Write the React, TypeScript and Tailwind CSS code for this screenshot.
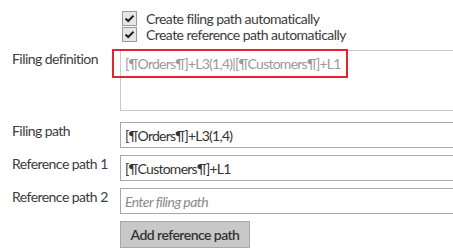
import React from "react";

function Check() {
  return (
    <span className="flex h-[15px] w-[15px] items-center justify-center border border-[#9a9a9a] bg-[#e6e6e6]">
      <svg width="11" height="9" viewBox="0 0 11 9">
        <path d="M1.5 4.5 L4.2 7 L9.5 1.8" fill="none" stroke="#222" strokeWidth="2" />
      </svg>
    </span>
  );
}

export default function App() {
  return (
    <div
      className="relative h-[252px] w-[453px] overflow-hidden bg-white text-[14px] tracking-[-0.55px] text-[#3c3c3c]"
      style={{ fontFamily: "Lato, 'Open Sans', sans-serif" }}
    >
      <div className="flex w-[560px] flex-col">
        <div className="ml-[122px] mt-[11px] flex flex-col gap-[1px]">
          <label className="flex h-[15px] items-center gap-[9px]">
            <Check />
            <span className="leading-[15px]">Create filing path automatically</span>
          </label>
          <label className="flex h-[15px] items-center gap-[9px]">
            <Check />
            <span className="leading-[15px]">Create reference path automatically</span>
          </label>
        </div>

        <div className="mt-[8px] flex">
          <div className="w-[120px] pl-[12px] leading-[18px]">Filing definition</div>
          <div className="h-[61px] flex-1 border border-[#c8c8c8] px-[4px] pt-[4px] leading-[18px] tracking-[-0.75px] text-[#9a9a9a]">
            [¶Orders¶]+L3(1,4)|[¶Customers¶]+L1
          </div>
        </div>

        <div className="mt-[11px] flex flex-col gap-[7px]">
          <div className="flex">
            <div className="w-[120px] pl-[12px] leading-[18px]">Filing path</div>
            <div className="flex h-[26px] flex-1 items-center border border-[#a8a8a8] px-[4px] tracking-[-0.75px] text-[#333]">
              [¶Orders¶]+L3(1,4)
            </div>
          </div>
          <div className="flex">
            <div className="w-[120px] pl-[12px] leading-[18px]">Reference path 1</div>
            <div className="flex h-[26px] flex-1 items-center border border-[#a8a8a8] px-[4px] tracking-[-0.75px] text-[#333]">
              [¶Customers¶]+L1
            </div>
          </div>
          <div className="flex">
            <div className="w-[120px] pl-[12px] leading-[18px]">Reference path 2</div>
            <div className="flex h-[26px] flex-1 items-center border border-[#a8a8a8] px-[4px] italic text-[#8a8a8a]">
              Enter filing path
            </div>
          </div>
        </div>

        <div className="ml-[120px] mt-[7px]">
          <button className="h-[27px] w-[130px] border border-[#a8a8a8] bg-[#c8c8c8] font-semibold text-[#333]">
            Add reference path
          </button>
        </div>
      </div>

      <div className="absolute left-[112px] top-[49px] h-[29px] w-[236px] border-2 border-[#e3262b]" />
    </div>
  );
}
